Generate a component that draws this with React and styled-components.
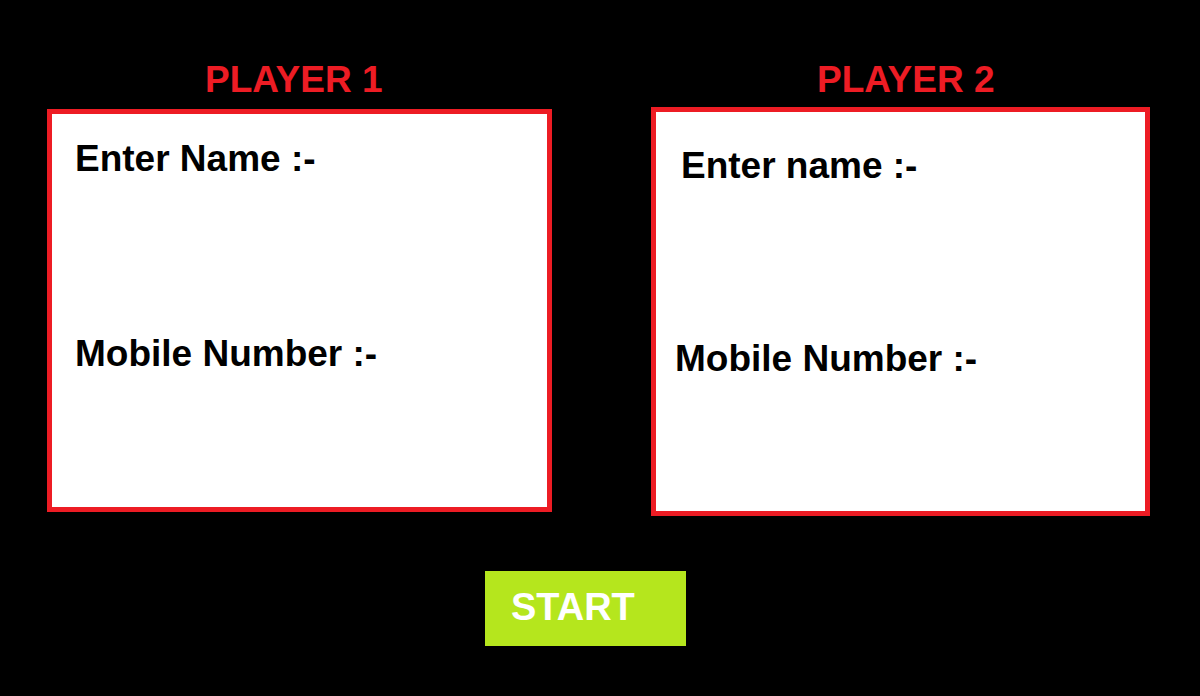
import React from "react";
import styled, { createGlobalStyle } from "styled-components";

const Global = createGlobalStyle`
  html, body { margin: 0; padding: 0; background: #000; }
  body { font-family: "Liberation Sans", Arial, sans-serif; }
  #root { width: 1200px; height: 696px; overflow: hidden; }
`;

const Page = styled.div`
  width: 1200px;
  height: 696px;
  background: #000;
  display: flex;
  flex-direction: column;
  align-items: flex-start;
`;

const Row = styled.div`
  display: flex;
  align-items: flex-start;
  margin-left: 47px;
  gap: 99px;
`;

const Column = styled.div`
  display: flex;
  flex-direction: column;
  width: ${(p) => p.$w}px;
`;

const Title = styled.h2`
  margin: 61px 0 0 0;
  padding-left: ${(p) => p.$indent}px;
  font-size: 37px;
  line-height: 37px;
  font-weight: 700;
  color: #ed1c24;
  white-space: nowrap;
`;

const Card = styled.div`
  box-sizing: border-box;
  margin-top: ${(p) => p.$gap}px;
  height: ${(p) => p.$h}px;
  background: #fff;
  border: 5px solid #ed1c24;
  display: flex;
  flex-direction: column;
`;

const Label = styled.div`
  font-size: 37px;
  line-height: 37px;
  font-weight: 700;
  color: #000;
  white-space: nowrap;
  margin-top: ${(p) => p.$top}px;
  padding-left: ${(p) => p.$indent}px;
`;

const StartButton = styled.button`
  margin: 55px 0 0 485px;
  width: 201px;
  height: 75px;
  box-sizing: border-box;
  border: none;
  background: #b5e61d;
  color: #fff;
  font-family: "Liberation Sans", Arial, sans-serif;
  font-size: 38px;
  line-height: 38px;
  font-weight: 700;
  text-align: left;
  padding: 0 0 4px 26px;
  cursor: pointer;
`;

export default function App() {
  return (
    <>
      <Global />
      <Page>
        <Row>
          <Column $w={505}>
            <Title $indent={158}>PLAYER 1</Title>
            <Card $gap={11} $h={403}>
              <Label $top={26} $indent={23}>Enter Name :-</Label>
              <Label $top={158} $indent={23}>Mobile Number :-</Label>
            </Card>
          </Column>
          <Column $w={499}>
            <Title $indent={166}>PLAYER 2</Title>
            <Card $gap={9} $h={409}>
              <Label $top={35} $indent={25}>Enter name :-</Label>
              <Label $top={156} $indent={19}>Mobile Number :-</Label>
            </Card>
          </Column>
        </Row>
        <StartButton>START</StartButton>
      </Page>
    </>
  );
}
